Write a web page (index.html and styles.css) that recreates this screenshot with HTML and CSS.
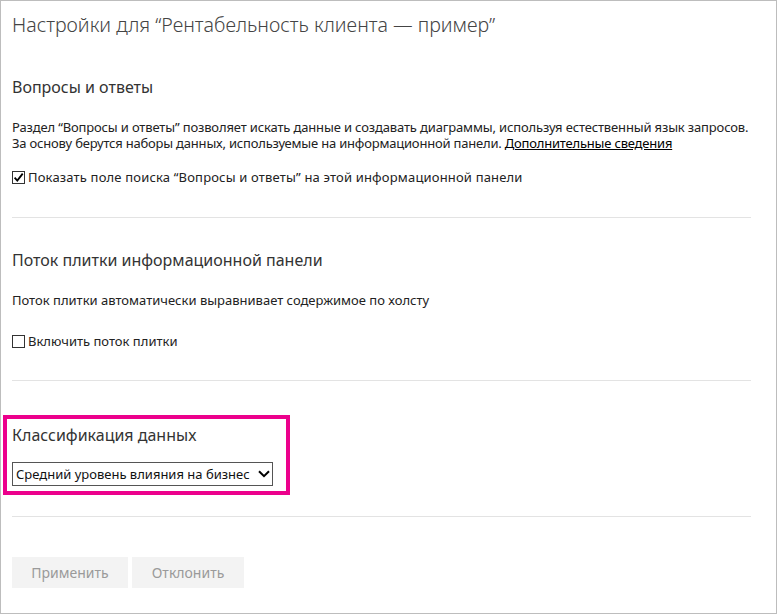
FILE: index.html
```html
<!DOCTYPE html>
<html lang="ru">
<head>
<meta charset="utf-8">
<link rel="stylesheet" href="styles.css">
</head>
<body>
<div class="frame">
  <h1 class="title">Настройки для “Рентабельность клиента — пример”</h1>

  <section class="section qa">
    <h2 class="heading">Вопросы и ответы</h2>
    <p class="text"><span class="line l1">Раздел “Вопросы и ответы” позволяет искать данные и создавать диаграммы, используя естественный язык запросов.</span><span class="line l2">За основу берутся наборы данных, используемые на информационной панели. <a class="link" href="#">Дополнительные сведения</a></span></p>
    <label class="check">
      <span class="box"><svg viewBox="0 0 13 13" width="13" height="13"><path d="M2.6 6.6 L5.3 9.6 L10.7 2.6" fill="none" stroke="#000" stroke-width="1.8"/></svg></span>
      <span class="check-label wide">Показать поле поиска “Вопросы и ответы” на этой информационной панели</span>
    </label>
  </section>

  <section class="section flow">
    <h2 class="heading">Поток плитки информационной панели</h2>
    <p class="text single">Поток плитки автоматически выравнивает содержимое по холсту</p>
    <label class="check">
      <span class="box"></span>
      <span class="check-label">Включить поток плитки</span>
    </label>
  </section>

  <section class="section classify">
    <div class="highlight">
      <h2 class="heading">Классификация данных</h2>
      <div class="select">
        <span>Средний уровень влияния на бизнес</span>
        <svg class="chev" viewBox="0 0 12 8" width="12" height="8"><path d="M1 1.2 L6 6.2 L11 1.2" fill="none" stroke="#000" stroke-width="2"/></svg>
      </div>
    </div>
  </section>

  <div class="actions">
    <button class="btn apply">Применить</button>
    <button class="btn cancel">Отклонить</button>
  </div>
</div>
</body>
</html>
```

FILE: styles.css
```css
* { box-sizing: border-box; }
html, body { margin: 0; padding: 0; background: #fff; }
body {
  font-family: "Noto Sans", "Open Sans", sans-serif;
  color: #222;
}
.frame {
  width: 777px;
  height: 614px;
  border: 1px solid #bdbdbd;
  padding: 0 25px 0 11px;
  overflow: hidden;
}
.title {
  margin: 11px 0 0 0;
  font-size: 19.6px;
  line-height: 26px;
  font-weight: 300;
  color: #444;
  white-space: nowrap;
}
.section {
  border-bottom: 1px solid #e3e3e3;
}
.qa { padding-top: 37px; height: 180px; }
.flow { padding-top: 30px; height: 163px; }
.classify { height: 136px; position: relative; }
.heading {
  margin: 0;
  font-size: 16px;
  line-height: 24px;
  font-weight: 400;
  color: #333;
  white-space: nowrap;
}
.text {
  margin: 20px 0 0 0;
  font-size: 13px;
  line-height: 16px;
  color: #222;
}
.text.single { margin-top: 20px; }
.line { display: block; white-space: nowrap; }
.l1 { letter-spacing: -0.15px; }
.l2 { letter-spacing: -0.2px; }
.link { color: #000; text-decoration: underline; }
.check {
  display: flex;
  align-items: center;
  gap: 3px;
  font-size: 13px;
  line-height: 16px;
  margin-top: 18px;
  white-space: nowrap;
}
.check-label.wide { letter-spacing: 0.17px; }
.flow .check { margin-top: 25px; }
.box {
  width: 13px;
  height: 13px;
  border: 1px solid #333;
  display: inline-flex;
  background: #fff;
  position: relative;
  flex: none;
}
.box svg { position: absolute; left: -1px; top: -1px; }
.highlight {
  position: absolute;
  left: -9px;
  top: 34px;
  width: 287px;
  height: 80px;
  border: 4px solid #ec008c;
  padding: 4px 0 0 5px;
}
.select {
  margin-top: 15px;
  width: 261px;
  height: 24px;
  border: 1px solid #555;
  display: flex;
  align-items: center;
  justify-content: space-between;
  padding: 0 2px 0 3px;
  font-size: 13px;
  color: #111;
  white-space: nowrap;
}
.chev { margin-top: -1px; }
.actions {
  display: flex;
  gap: 4px;
  margin-top: 40px;
}
.btn {
  font-family: inherit;
  font-size: 14px;
  color: #9a9a9a;
  background: #f3f3f3;
  border: none;
  height: 31px;
  padding: 0;
}
.apply { width: 116px; }
.cancel { width: 112px; }
```
